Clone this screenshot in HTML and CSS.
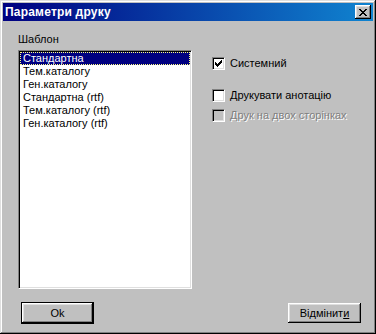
FILE: index.html
```html
<!DOCTYPE html>
<html lang="uk">
<head>
  <meta charset="UTF-8" />
  <title>Параметри друку</title>
  <link rel="stylesheet" href="styles.css">
</head>
<body>
  <div class="window">
    <div class="titlebar">
      <span class="title">Параметри друку</span>
      <button class="close" aria-label="Закрити">
        <svg width="8" height="7" viewBox="0 0 8 7" shape-rendering="crispEdges">
          <path d="M0 0h2v1h-2zM6 0h2v1h-2zM1 1h2v1h-2zM5 1h2v1h-2zM2 2h4v1h-4zM3 3h2v1h-2zM2 4h4v1h-4zM1 5h2v1h-2zM5 5h2v1h-2zM0 6h2v1h-2zM6 6h2v1h-2z" fill="#000"/>
        </svg>
      </button>
    </div>

    <div class="content">
      <div class="main">
        <div class="left">
          <div class="label">Шаблон</div>
          <ul class="listbox">
            <li class="selected">Стандартна</li>
            <li>Тем.каталогу</li>
            <li>Ген.каталогу</li>
            <li>Стандартна (rtf)</li>
            <li>Тем.каталогу (rtf)</li>
            <li>Ген.каталогу (rtf)</li>
          </ul>
        </div>

        <div class="options">
          <label class="option first">
            <span class="box">
              <svg width="7" height="7" viewBox="0 0 7 7" shape-rendering="crispEdges">
                <path d="M6 0h1v1h-1zM5 1h2v1h-2zM0 2h1v1h-1zM4 2h3v1h-3zM0 3h2v1h-2zM3 3h3v1h-3zM0 4h5v1h-5zM1 5h3v1h-3zM2 6h1v1h-1z" fill="#000"/>
              </svg>
            </span>
            Системний
          </label>
          <label class="option second">
            <span class="box"></span>
            Друкувати анотацію
          </label>
          <label class="option third disabled">
            <span class="box"></span>
            Друк на двох сторінках
          </label>
        </div>
      </div>

      <div class="buttons">
        <button class="btn default">Ok</button>
        <button class="btn">Відмінит<u>и</u></button>
      </div>
    </div>
  </div>
</body>
</html>
```

FILE: styles.css
```css
body {
  margin: 0;
  font-family: "Liberation Sans", Arial, sans-serif;
  font-size: 11px;
  color: #000;
  background: #c0c0c0;
}
.window {
  width: 376px;
  height: 334px;
  box-sizing: border-box;
  padding: 3px;
  background: #c0c0c0;
  box-shadow: inset -1px -1px #000, inset 1px 1px #dfdfdf, inset -2px -2px #808080, inset 2px 2px #fff;
}
.titlebar {
  height: 18px;
  display: flex;
  align-items: center;
  justify-content: space-between;
  padding: 0 2px;
  background: linear-gradient(to right, #000080, #1084d0);
}
.title {
  color: #fff;
  font-weight: bold;
  font-size: 12px;
  letter-spacing: 0.2px;
}
.close {
  width: 16px;
  height: 14px;
  padding: 0;
  border: none;
  background: #c0c0c0;
  display: flex;
  align-items: center;
  justify-content: center;
  box-shadow: inset -1px -1px #000, inset 1px 1px #fff, inset -2px -2px #808080, inset 2px 2px #dfdfdf;
}
.content {
  padding: 12px 12px 0 15px;
}
.main {
  display: flex;
}
.left {
  width: 174px;
}
.label {
  line-height: 13px;
  margin-bottom: 4px;
}
.listbox {
  list-style: none;
  margin: 0;
  padding: 1px;
  height: 239px;
  box-sizing: border-box;
  background: #fff;
  border: 1px solid;
  border-color: #808080 #fff #fff #808080;
  box-shadow: inset 1px 1px #000, inset -1px -1px #dfdfdf;
}
.listbox li {
  height: 13px;
  padding-left: 2px;
  border: 1px solid transparent;
  box-sizing: border-box;
  line-height: 11px;
  white-space: nowrap;
}
.listbox .selected {
  background: #000080;
  color: #fff;
  border: 1px dotted #ffff80;
}
.options {
  margin-left: 20px;
  padding-top: 24px;
}
.option {
  display: flex;
  align-items: center;
  gap: 5px;
  height: 13px;
  line-height: 13px;
}
.option.second {
  margin-top: 19px;
}
.option.third {
  margin-top: 7px;
}
.box {
  width: 13px;
  height: 13px;
  box-sizing: border-box;
  background: #fff;
  border: 1px solid;
  border-color: #808080 #fff #fff #808080;
  box-shadow: inset 1px 1px #000, inset -1px -1px #dfdfdf;
  display: flex;
  align-items: center;
  justify-content: center;
}
.disabled {
  color: #808080;
  text-shadow: 1px 1px #fff;
}
.disabled .box {
  background: #c0c0c0;
}
.buttons {
  display: flex;
  align-items: center;
  justify-content: space-between;
  margin-top: 13px;
  padding-left: 3px;
}
.btn {
  width: 73px;
  height: 20px;
  padding: 0;
  border: none;
  background: #c0c0c0;
  font-family: "Liberation Sans", Arial, sans-serif;
  font-size: 11px;
  color: #000;
  box-shadow: inset -1px -1px #000, inset 1px 1px #fff, inset -2px -2px #808080, inset 2px 2px #dfdfdf;
}
.btn.default {
  height: 22px;
  border: 1px solid #000;
}
```
